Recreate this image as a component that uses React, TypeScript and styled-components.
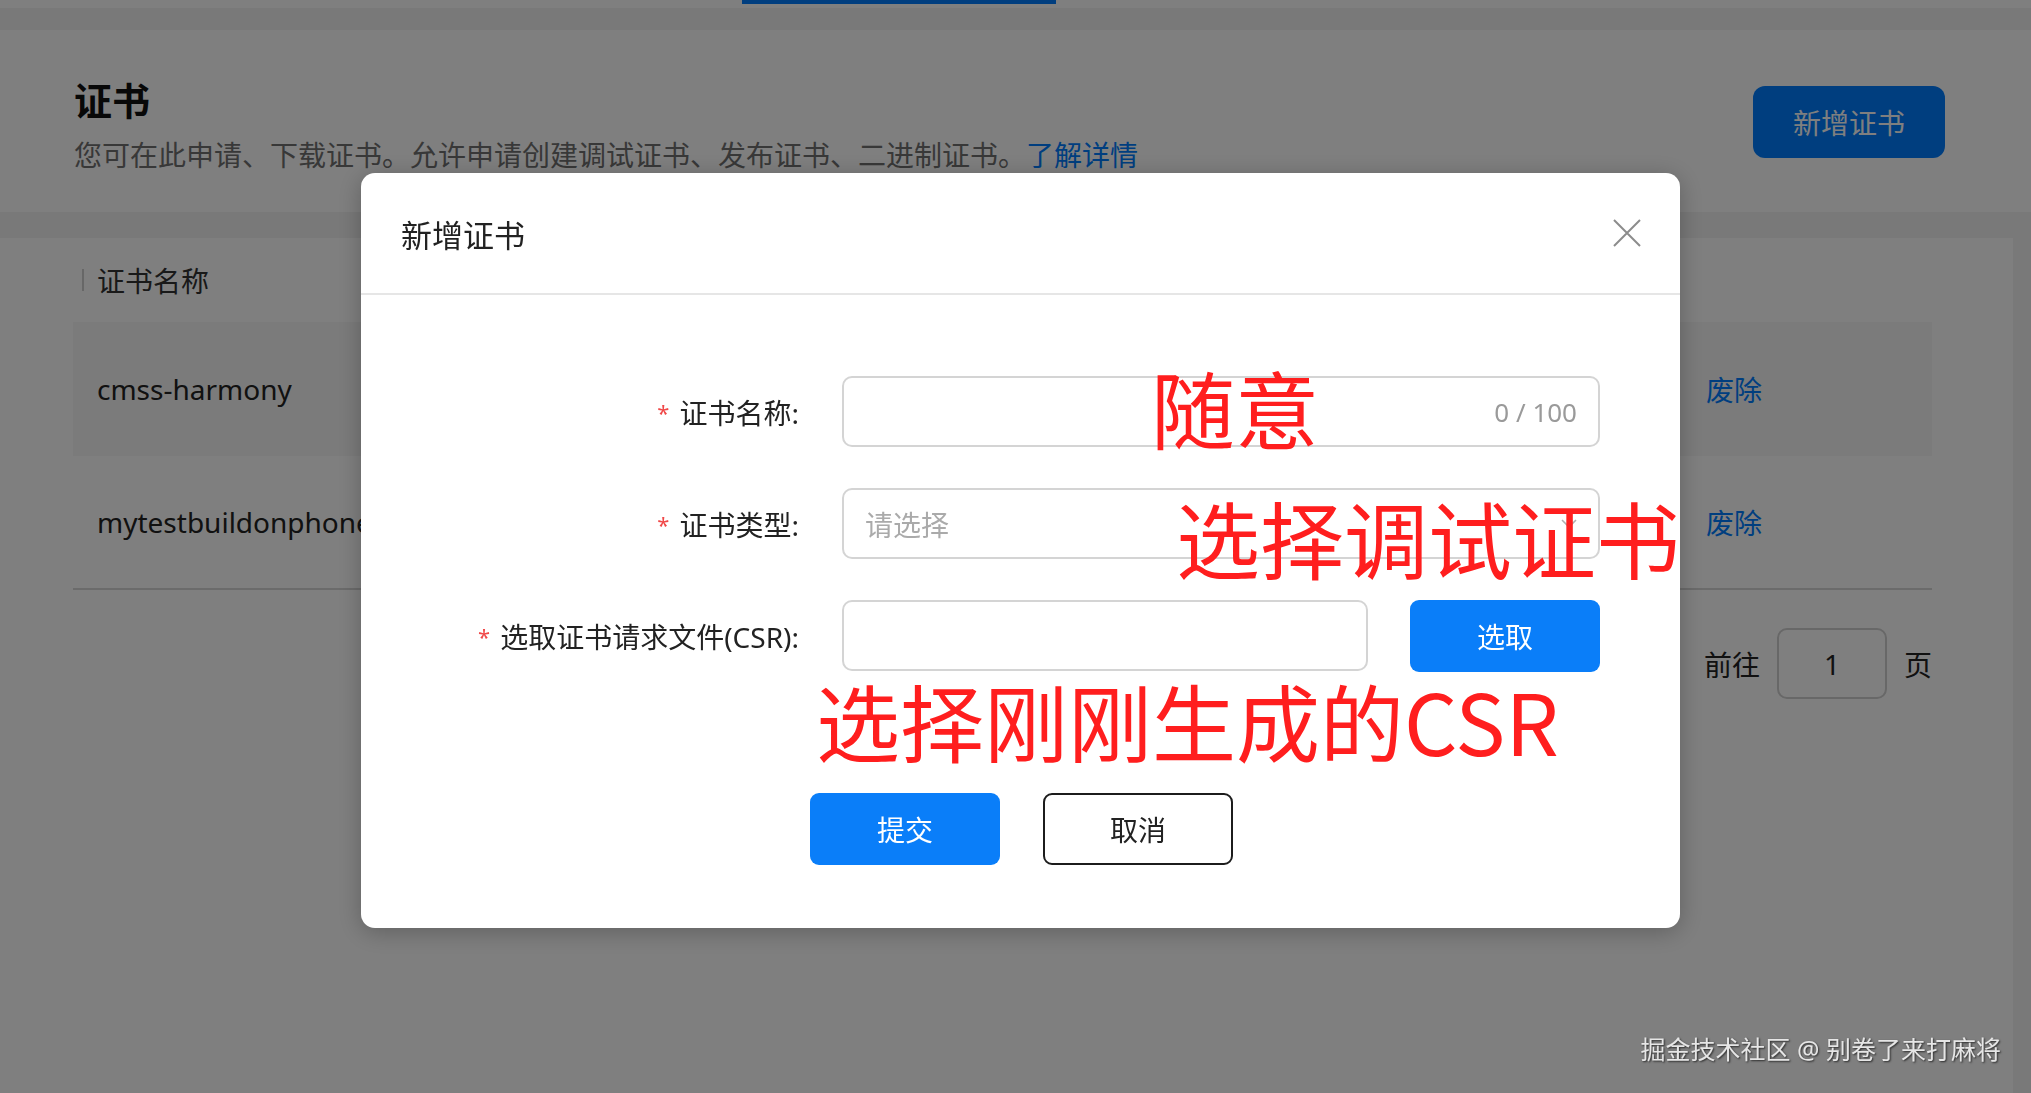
import styled, { createGlobalStyle } from 'styled-components';

const GlobalStyle = createGlobalStyle`
  html, body {
    margin: 0;
    padding: 0;
    background: #f2f2f2;
    font-family: "Noto Sans", "Noto Sans CJK SC", sans-serif;
    color: #222;
  }
  * { box-sizing: border-box; }
`;

const BLUE = '#007dff';
const ACTION_BLUE = '#0a7ef9';

interface Cert {
    name: string;
}

const certs: Cert[] = [
    { name: 'cmss-harmony' },
    { name: 'mytestbuildonphone' },
];

export default function App () {
    return (
        <>
            <GlobalStyle />
            <Page>
                <NavBar>
                    <TabIndicator />
                </NavBar>
                <HeaderCard>
                    <HeaderText>
                        <PageTitle>证书</PageTitle>
                        <PageDesc>
                            您可在此申请、下载证书。允许申请创建调试证书、发布证书、二进制证书。<DescLink>了解详情</DescLink>
                        </PageDesc>
                    </HeaderText>
                    <PrimaryButton>新增证书</PrimaryButton>
                </HeaderCard>
                <TableCard>
                    <TableHead>
                        <HeadCell><ColDivider />证书名称</HeadCell>
                        <HeadCell />
                    </TableHead>
                    {certs.map((c, i) => (
                        <TableRow key={c.name} hovered={i === 0} last={i === certs.length - 1}>
                            <NameCell>{c.name}</NameCell>
                            <ActionCell>废除</ActionCell>
                        </TableRow>
                    ))}
                    <Pager>
                        <span>前往</span>
                        <PagerInput>1</PagerInput>
                        <span>页</span>
                    </Pager>
                </TableCard>
            </Page>

            <Overlay>
                <Modal>
                    <ModalHeader>
                        <ModalTitle>新增证书</ModalTitle>
                        <CloseIcon width="28" height="28" viewBox="0 0 28 28">
                            <path d="M1 1 L27 27 M27 1 L1 27" stroke="#8c8c8c" strokeWidth="2" fill="none" />
                        </CloseIcon>
                    </ModalHeader>
                    <FormGrid>
                        <Label><Star>*</Star>证书名称:</Label>
                        <InputBox>
                            <Counter>0 / 100</Counter>
                        </InputBox>

                        <Label><Star>*</Star>证书类型:</Label>
                        <InputBox>
                            <Placeholder>请选择</Placeholder>
                            <svg width="16" height="10" viewBox="0 0 16 10">
                                <path d="M1 1 L8 8 L15 1" stroke="#b0b0b0" strokeWidth="1.6" fill="none" />
                            </svg>
                        </InputBox>

                        <Label><Star>*</Star>选取证书请求文件(CSR):</Label>
                        <FileRow>
                            <InputBox />
                            <ActionButton>选取</ActionButton>
                        </FileRow>
                    </FormGrid>
                    <Footer>
                        <ActionButton>提交</ActionButton>
                        <GhostButton>取消</GhostButton>
                    </Footer>

                    <Note style={{ left: 790, top: 192 }}>随意</Note>
                    <Note style={{ left: 815, top: 322 }}>选择调试证书</Note>
                    <Note style={{ left: 455, top: 505 }}>选择刚刚生成的CSR</Note>
                </Modal>
            </Overlay>

            <Watermark>掘金技术社区 @ 别卷了来打麻将</Watermark>
        </>
    );
}

const Page = styled.div`
min-height: 1093px;
display: flex;
flex-direction: column;
`;

const NavBar = styled.div`
height: 8px;
background: #ffffff;
`;

const TabIndicator = styled.div`
width: 314px;
height: 4px;
margin-left: 742px;
background: ${BLUE};
`;

const HeaderCard = styled.div`
margin-top: 22px;
height: 182px;
display: flex;
justify-content: space-between;
align-items: flex-start;
padding: 0 86px 0 74px;
background: #ffffff;
`;

const HeaderText = styled.div`
padding-top: 45px;
`;

const PageTitle = styled.h1`
margin: 0;
font-size: 38px;
line-height: 50px;
font-weight: 700;
color: #111;
`;

const PageDesc = styled.p`
margin: 10px 0 0;
font-size: 28px;
line-height: 40px;
color: #707070;
`;

const DescLink = styled.span`
color: ${BLUE};
`;

const PrimaryButton = styled.div`
margin-top: 56px;
width: 192px;
height: 72px;
display: flex;
align-items: center;
justify-content: center;
border-radius: 12px;
background: ${BLUE};
color: #fff;
font-size: 28px;
`;

const TableCard = styled.div`
flex: 1;
margin: 26px 18px 0 0;
padding: 0 81px 0 73px;
background: #ffffff;
`;

const TableHead = styled.div`
height: 84px;
display: grid;
grid-template-columns: 1fr 226px;
align-items: center;
`;

const HeadCell = styled.div`
display: flex;
align-items: center;
font-size: 28px;
color: #333;
`;

const ColDivider = styled.span`
width: 2px;
height: 22px;
margin: 0 13px 0 9px;
background: #cfcfcf;
`;

const TableRow = styled.div<{ hovered: boolean; last: boolean }>`
height: 134px;
display: grid;
grid-template-columns: 1fr 226px;
align-items: center;
background: ${p => p.hovered ? '#f6f6f6' : '#ffffff'};
border-bottom: ${p => p.last ? '2px solid #d6d6d6' : 'none'};
`;

const NameCell = styled.div`
padding-left: 24px;
font-size: 28px;
color: #222;
`;

const ActionCell = styled.div`
font-size: 28px;
color: ${BLUE};
`;

const Pager = styled.div`
margin-top: 38px;
display: flex;
justify-content: flex-end;
align-items: center;
gap: 17px;
font-size: 28px;
color: #222;
`;

const PagerInput = styled.div`
width: 110px;
height: 71px;
display: flex;
align-items: center;
justify-content: center;
border: 2px solid #d0d0d0;
border-radius: 10px;
`;

const Overlay = styled.div`
position: fixed;
inset: 0;
padding: 173px 0 0 361px;
background: rgba(0, 0, 0, 0.5);
`;

const Modal = styled.div`
position: relative;
width: 1319px;
overflow: hidden;
background: #ffffff;
border-radius: 14px;
box-shadow: 0 4px 24px rgba(0, 0, 0, 0.25);
`;

const ModalHeader = styled.div`
height: 122px;
display: flex;
align-items: center;
justify-content: space-between;
padding: 0 39px 0 40px;
border-bottom: 2px solid #e6e6e6;
`;

const ModalTitle = styled.div`
font-size: 31px;
color: #222;
`;

const CloseIcon = styled.svg`
display: block;
`;

const FormGrid = styled.div`
display: grid;
grid-template-columns: 481px 758px;
row-gap: 41px;
padding-top: 81px;
align-items: center;
`;

const Label = styled.div`
display: flex;
justify-content: flex-end;
align-items: center;
padding-right: 43px;
font-size: 28px;
color: #222;
`;

const Star = styled.span`
margin-right: 10px;
font-size: 22px;
color: #f04848;
`;

const InputBox = styled.div`
flex: 1;
height: 71px;
display: flex;
align-items: center;
justify-content: space-between;
padding: 0 21px 0 21px;
border: 2px solid #d4d4d4;
border-radius: 10px;
background: #fff;
`;

const Counter = styled.span`
margin-left: auto;
font-size: 26px;
color: #9a9a9a;
`;

const Placeholder = styled.span`
font-size: 28px;
color: #aaaaaa;
`;

const FileRow = styled.div`
display: flex;
gap: 42px;
`;

const ActionButton = styled.div`
width: 190px;
height: 72px;
display: flex;
align-items: center;
justify-content: center;
border-radius: 9px;
background: ${ACTION_BLUE};
color: #fff;
font-size: 28px;
`;

const GhostButton = styled(ActionButton)`
background: #fff;
border: 2px solid #1c1c1c;
color: #222;
`;

const Footer = styled.div`
display: flex;
gap: 43px;
padding: 121px 0 63px 449px;
`;

const Note = styled.div`
position: absolute;
font-family: "Noto Sans CJK SC", sans-serif;
font-size: 84px;
line-height: 1;
color: #ff1e1e;
white-space: nowrap;
`;

const Watermark = styled.div`
position: fixed;
right: 30px;
bottom: 27px;
font-size: 25px;
color: #e6e6e6;
text-shadow: 1px 1px 2px #2a2a2a;
`;
